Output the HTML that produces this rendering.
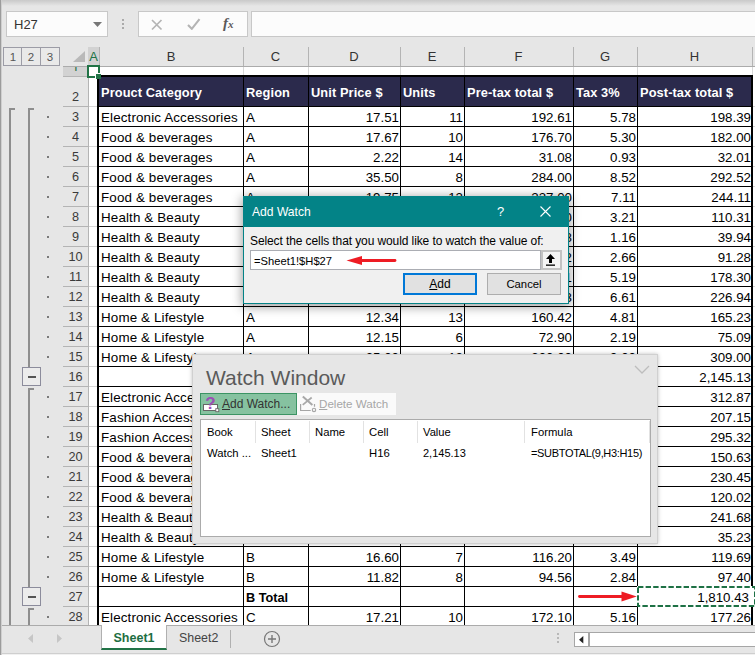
<!DOCTYPE html><html><head><meta charset="utf-8"><title>Add Watch</title><style>
*{box-sizing:border-box;margin:0;padding:0}
html,body{width:755px;height:655px;overflow:hidden}
body{position:relative;background:#e6e6e6;font-family:"Liberation Sans",sans-serif;font-size:13px;color:#000}
.abs,.abs *{position:absolute}
.abs u,.abs text{position:static}
#topgrad{left:0;top:0;width:755px;height:6px;background:linear-gradient(#c9c9c9,#e6e6e6)}
#leftedge{left:0;top:0;width:2px;height:655px;background:linear-gradient(90deg,#9c9c9c 0 1px,#cfcfcf 1px 2px)}
.box{background:#fcfcfc;border:1px solid #c8c8c8}
#namebox{left:6px;top:11px;width:102px;height:26px}
#namebox span{left:7px;top:6px;font-size:13px;color:#333;white-space:nowrap}
#fxbox{left:138px;top:11px;width:110px;height:26px}
#fbar{left:251px;top:11px;width:510px;height:26px}
.t{white-space:nowrap;line-height:1}
/* sheet */
#sheet{left:88px;top:67px;width:667px;height:559px;background:#fff}
.colh{top:47px;height:19px;text-align:center;font-size:13px;color:#333;line-height:19px}
.colsep{top:47px;width:1px;height:19px;background:#b4b4b4}
.rowh{left:63px;width:25px;text-align:center;font-size:12.7px;color:#3a3a3a;line-height:23px;height:20px}
.rowline{left:63px;width:25px;height:1px;background:#b4b4b4}
.cell{height:20px;line-height:24px;font-size:13.3px;white-space:nowrap;overflow:hidden}
.l{text-align:left;padding-left:1px;font-size:13.4px;letter-spacing:.13px}
.r{text-align:right;padding-right:1px}
.c2{padding-left:2px}
.hl{background:#000}
.dot{left:47px;width:2px;height:2px;background:#7a7a7a}
.br{background:#8e8e8e}
.minus{left:22px;width:19px;height:19px;border:1px solid #8c8c9c;background:#ececec}
.minus i{left:5px;top:8px;width:8px;height:2px;background:#555}
.dlg{font-size:12px;color:#000}
.ui{font-family:"Liberation Sans",sans-serif;font-size:12px;white-space:nowrap;line-height:1}
.lvl{top:47px;width:20px;height:19px;border:1px solid #9c9ca6;background:#e9e9e9;text-align:center;font-size:11.5px;line-height:18px;color:#555}
</style></head><body><div class="abs">
<div id="topgrad"></div>
<div id="namebox" class="box"><span class="t">H27</span><svg style="left:86px;top:10px" width="9" height="5"><path d="M0 0h9L4.5 5z" fill="#777"/></svg></div>
<svg style="left:122px;top:19px" width="3" height="11"><rect x="0" y="0" width="2" height="2" fill="#aaa"/><rect x="0" y="4" width="2" height="2" fill="#aaa"/><rect x="0" y="8" width="2" height="2" fill="#aaa"/></svg>
<div id="fxbox" class="box"><svg style="left:12px;top:7px" width="12" height="12"><path d="M1 1l9.5 9.5M10.5 1L1 10.5" stroke="#b4b4b4" stroke-width="1.7" fill="none"/></svg><svg style="left:48px;top:6px" width="14" height="12"><path d="M1 7l3.8 3.8L12.5 1.2" stroke="#b4b4b4" stroke-width="2.1" fill="none"/></svg><span class="t" style="left:84px;top:4px;font-family:'Liberation Serif',serif;font-style:italic;font-weight:bold;font-size:15px;color:#5a5a5a">f<span style="position:static;font-size:11px">x</span></span></div>
<div id="fbar" class="box"></div>
<div class="lvl" style="left:3px">1</div>
<div class="lvl" style="left:21px">2</div>
<div class="lvl" style="left:40px">3</div>
<svg style="left:73px;top:51px" width="13" height="12"><path d="M12 0v11H0z" fill="#b9b9b9"/></svg>
<div class="colh" style="left:88px;width:11px;background:#d2d2d2;color:#217346">A</div>
<div class="colh" style="left:99px;width:144px">B</div>
<div class="colh" style="left:243px;width:65px">C</div>
<div class="colh" style="left:308px;width:92px">D</div>
<div class="colh" style="left:400px;width:64px">E</div>
<div class="colh" style="left:464px;width:109px">F</div>
<div class="colh" style="left:573px;width:64px">G</div>
<div class="colh" style="left:637px;width:115px">H</div>
<div class="colsep" style="left:99px"></div>
<div class="colsep" style="left:243px"></div>
<div class="colsep" style="left:308px"></div>
<div class="colsep" style="left:400px"></div>
<div class="colsep" style="left:464px"></div>
<div class="colsep" style="left:573px"></div>
<div class="colsep" style="left:637px"></div>
<div class="colsep" style="left:752px"></div>
<div style="left:63px;top:66px;width:692px;height:1px;background:#ababab"></div>
<div id="sheet"></div>
<div style="left:88px;top:66px;width:1px;height:560px;background:#b4b4b4"></div>
<div style="left:63px;top:67px;width:25px;height:9px;background:#d2d2d2"><div style="left:0;top:0;width:25px;height:4px;overflow:hidden"><span class="t" style="left:9px;top:-5px;font-size:13px;color:#217346">1</span></div></div>
<div class="rowline" style="top:76px"></div>
<div style="left:243px;top:67px;width:1px;height:9px;background:#d8d8d8"></div>
<div style="left:308px;top:67px;width:1px;height:9px;background:#d8d8d8"></div>
<div style="left:400px;top:67px;width:1px;height:9px;background:#d8d8d8"></div>
<div style="left:464px;top:67px;width:1px;height:9px;background:#d8d8d8"></div>
<div style="left:573px;top:67px;width:1px;height:9px;background:#d8d8d8"></div>
<div style="left:637px;top:67px;width:1px;height:9px;background:#d8d8d8"></div>
<div style="left:752px;top:67px;width:1px;height:9px;background:#d8d8d8"></div>
<div class="rowh" style="top:86px">2</div><div class="rowline" style="top:106px"></div>
<div style="left:97px;top:75px;width:656px;height:32px;background:#000"></div>
<div style="left:99px;top:77px;width:144px;height:29px;background:#2b2a4c;color:#fff;font-weight:bold;font-size:12.8px;letter-spacing:.1px;line-height:1;white-space:nowrap;overflow:hidden"><span style="left:2px;top:10px">Prouct Category</span></div>
<div style="left:244px;top:77px;width:64px;height:29px;background:#2b2a4c;color:#fff;font-weight:bold;font-size:12.8px;letter-spacing:.1px;line-height:1;white-space:nowrap;overflow:hidden"><span style="left:2px;top:10px">Region</span></div>
<div style="left:309px;top:77px;width:91px;height:29px;background:#2b2a4c;color:#fff;font-weight:bold;font-size:12.8px;letter-spacing:.1px;line-height:1;white-space:nowrap;overflow:hidden"><span style="left:2px;top:10px">Unit Price $</span></div>
<div style="left:401px;top:77px;width:63px;height:29px;background:#2b2a4c;color:#fff;font-weight:bold;font-size:12.8px;letter-spacing:.1px;line-height:1;white-space:nowrap;overflow:hidden"><span style="left:2px;top:10px">Units</span></div>
<div style="left:465px;top:77px;width:108px;height:29px;background:#2b2a4c;color:#fff;font-weight:bold;font-size:12.8px;letter-spacing:.1px;line-height:1;white-space:nowrap;overflow:hidden"><span style="left:2px;top:10px">Pre-tax total $</span></div>
<div style="left:574px;top:77px;width:63px;height:29px;background:#2b2a4c;color:#fff;font-weight:bold;font-size:12.8px;letter-spacing:.1px;line-height:1;white-space:nowrap;overflow:hidden"><span style="left:2px;top:10px">Tax 3%</span></div>
<div style="left:638px;top:77px;width:113px;height:29px;background:#2b2a4c;color:#fff;font-weight:bold;font-size:12.8px;letter-spacing:.1px;line-height:1;white-space:nowrap;overflow:hidden"><span style="left:2px;top:10px">Post-tax total $</span></div>
<div class="rowh" style="top:106px">3</div><div class="rowline" style="top:126px"></div>
<div class="cell l" style="left:100px;top:106px;width:143px">Electronic Accessories</div>
<div class="cell l c2" style="left:244px;top:106px;width:64px">A</div>
<div class="cell r" style="left:309px;top:106px;width:91px">17.51</div>
<div class="cell r" style="left:401px;top:106px;width:63px">11</div>
<div class="cell r" style="left:465px;top:106px;width:108px">192.61</div>
<div class="cell r" style="left:574px;top:106px;width:63px">5.78</div>
<div class="cell r" style="left:638px;top:106px;width:114px">198.39</div>
<div class="rowh" style="top:126px">4</div><div class="rowline" style="top:146px"></div>
<div class="cell l" style="left:100px;top:126px;width:143px">Food & beverages</div>
<div class="cell l c2" style="left:244px;top:126px;width:64px">A</div>
<div class="cell r" style="left:309px;top:126px;width:91px">17.67</div>
<div class="cell r" style="left:401px;top:126px;width:63px">10</div>
<div class="cell r" style="left:465px;top:126px;width:108px">176.70</div>
<div class="cell r" style="left:574px;top:126px;width:63px">5.30</div>
<div class="cell r" style="left:638px;top:126px;width:114px">182.00</div>
<div class="rowh" style="top:146px">5</div><div class="rowline" style="top:166px"></div>
<div class="cell l" style="left:100px;top:146px;width:143px">Food & beverages</div>
<div class="cell l c2" style="left:244px;top:146px;width:64px">A</div>
<div class="cell r" style="left:309px;top:146px;width:91px">2.22</div>
<div class="cell r" style="left:401px;top:146px;width:63px">14</div>
<div class="cell r" style="left:465px;top:146px;width:108px">31.08</div>
<div class="cell r" style="left:574px;top:146px;width:63px">0.93</div>
<div class="cell r" style="left:638px;top:146px;width:114px">32.01</div>
<div class="rowh" style="top:166px">6</div><div class="rowline" style="top:186px"></div>
<div class="cell l" style="left:100px;top:166px;width:143px">Food & beverages</div>
<div class="cell l c2" style="left:244px;top:166px;width:64px">A</div>
<div class="cell r" style="left:309px;top:166px;width:91px">35.50</div>
<div class="cell r" style="left:401px;top:166px;width:63px">8</div>
<div class="cell r" style="left:465px;top:166px;width:108px">284.00</div>
<div class="cell r" style="left:574px;top:166px;width:63px">8.52</div>
<div class="cell r" style="left:638px;top:166px;width:114px">292.52</div>
<div class="rowh" style="top:186px">7</div><div class="rowline" style="top:206px"></div>
<div class="cell l" style="left:100px;top:186px;width:143px">Food & beverages</div>
<div class="cell l c2" style="left:244px;top:186px;width:64px">A</div>
<div class="cell r" style="left:309px;top:186px;width:91px">19.75</div>
<div class="cell r" style="left:401px;top:186px;width:63px">12</div>
<div class="cell r" style="left:465px;top:186px;width:108px">237.00</div>
<div class="cell r" style="left:574px;top:186px;width:63px">7.11</div>
<div class="cell r" style="left:638px;top:186px;width:114px">244.11</div>
<div class="rowh" style="top:206px">8</div><div class="rowline" style="top:226px"></div>
<div class="cell l" style="left:100px;top:206px;width:143px">Health & Beauty</div>
<div class="cell l c2" style="left:244px;top:206px;width:64px">A</div>
<div class="cell r" style="left:309px;top:206px;width:91px">10.71</div>
<div class="cell r" style="left:401px;top:206px;width:63px">10</div>
<div class="cell r" style="left:465px;top:206px;width:108px">107.10</div>
<div class="cell r" style="left:574px;top:206px;width:63px">3.21</div>
<div class="cell r" style="left:638px;top:206px;width:114px">110.31</div>
<div class="rowh" style="top:226px">9</div><div class="rowline" style="top:246px"></div>
<div class="cell l" style="left:100px;top:226px;width:143px">Health & Beauty</div>
<div class="cell l c2" style="left:244px;top:226px;width:64px">A</div>
<div class="cell r" style="left:309px;top:226px;width:91px">12.93</div>
<div class="cell r" style="left:401px;top:226px;width:63px">3</div>
<div class="cell r" style="left:465px;top:226px;width:108px">38.78</div>
<div class="cell r" style="left:574px;top:226px;width:63px">1.16</div>
<div class="cell r" style="left:638px;top:226px;width:114px">39.94</div>
<div class="rowh" style="top:246px">10</div><div class="rowline" style="top:266px"></div>
<div class="cell l" style="left:100px;top:246px;width:143px">Health & Beauty</div>
<div class="cell l c2" style="left:244px;top:246px;width:64px">A</div>
<div class="cell r" style="left:309px;top:246px;width:91px">11.08</div>
<div class="cell r" style="left:401px;top:246px;width:63px">8</div>
<div class="cell r" style="left:465px;top:246px;width:108px">88.62</div>
<div class="cell r" style="left:574px;top:246px;width:63px">2.66</div>
<div class="cell r" style="left:638px;top:246px;width:114px">91.28</div>
<div class="rowh" style="top:266px">11</div><div class="rowline" style="top:286px"></div>
<div class="cell l" style="left:100px;top:266px;width:143px">Health & Beauty</div>
<div class="cell l c2" style="left:244px;top:266px;width:64px">A</div>
<div class="cell r" style="left:309px;top:266px;width:91px">14.43</div>
<div class="cell r" style="left:401px;top:266px;width:63px">12</div>
<div class="cell r" style="left:465px;top:266px;width:108px">173.11</div>
<div class="cell r" style="left:574px;top:266px;width:63px">5.19</div>
<div class="cell r" style="left:638px;top:266px;width:114px">178.30</div>
<div class="rowh" style="top:286px">12</div><div class="rowline" style="top:306px"></div>
<div class="cell l" style="left:100px;top:286px;width:143px">Health & Beauty</div>
<div class="cell l c2" style="left:244px;top:286px;width:64px">A</div>
<div class="cell r" style="left:309px;top:286px;width:91px">16.95</div>
<div class="cell r" style="left:401px;top:286px;width:63px">13</div>
<div class="cell r" style="left:465px;top:286px;width:108px">220.33</div>
<div class="cell r" style="left:574px;top:286px;width:63px">6.61</div>
<div class="cell r" style="left:638px;top:286px;width:114px">226.94</div>
<div class="rowh" style="top:306px">13</div><div class="rowline" style="top:326px"></div>
<div class="cell l" style="left:100px;top:306px;width:143px">Home & Lifestyle</div>
<div class="cell l c2" style="left:244px;top:306px;width:64px">A</div>
<div class="cell r" style="left:309px;top:306px;width:91px">12.34</div>
<div class="cell r" style="left:401px;top:306px;width:63px">13</div>
<div class="cell r" style="left:465px;top:306px;width:108px">160.42</div>
<div class="cell r" style="left:574px;top:306px;width:63px">4.81</div>
<div class="cell r" style="left:638px;top:306px;width:114px">165.23</div>
<div class="rowh" style="top:326px">14</div><div class="rowline" style="top:346px"></div>
<div class="cell l" style="left:100px;top:326px;width:143px">Home & Lifestyle</div>
<div class="cell l c2" style="left:244px;top:326px;width:64px">A</div>
<div class="cell r" style="left:309px;top:326px;width:91px">12.15</div>
<div class="cell r" style="left:401px;top:326px;width:63px">6</div>
<div class="cell r" style="left:465px;top:326px;width:108px">72.90</div>
<div class="cell r" style="left:574px;top:326px;width:63px">2.19</div>
<div class="cell r" style="left:638px;top:326px;width:114px">75.09</div>
<div class="rowh" style="top:346px">15</div><div class="rowline" style="top:366px"></div>
<div class="cell l" style="left:100px;top:346px;width:143px">Home & Lifestyle</div>
<div class="cell l c2" style="left:244px;top:346px;width:64px">A</div>
<div class="cell r" style="left:309px;top:346px;width:91px">25.00</div>
<div class="cell r" style="left:401px;top:346px;width:63px">12</div>
<div class="cell r" style="left:465px;top:346px;width:108px">300.00</div>
<div class="cell r" style="left:574px;top:346px;width:63px">9.00</div>
<div class="cell r" style="left:638px;top:346px;width:114px">309.00</div>
<div class="rowh" style="top:366px">16</div><div class="rowline" style="top:386px"></div>
<div class="cell l" style="left:244px;top:366px;width:64px;font-weight:bold;font-size:12.7px;letter-spacing:0;padding-left:2px">A Total</div>
<div class="cell r" style="left:638px;top:366px;width:114px">2,145.13</div>
<div class="rowh" style="top:386px">17</div><div class="rowline" style="top:406px"></div>
<div class="cell l" style="left:100px;top:386px;width:143px">Electronic Accessories</div>
<div class="cell l c2" style="left:244px;top:386px;width:64px">B</div>
<div class="cell r" style="left:309px;top:386px;width:91px">20.25</div>
<div class="cell r" style="left:401px;top:386px;width:63px">15</div>
<div class="cell r" style="left:465px;top:386px;width:108px">303.76</div>
<div class="cell r" style="left:574px;top:386px;width:63px">9.11</div>
<div class="cell r" style="left:638px;top:386px;width:114px">312.87</div>
<div class="rowh" style="top:406px">18</div><div class="rowline" style="top:426px"></div>
<div class="cell l" style="left:100px;top:406px;width:143px">Fashion Accessories</div>
<div class="cell l c2" style="left:244px;top:406px;width:64px">B</div>
<div class="cell r" style="left:309px;top:406px;width:91px">18.28</div>
<div class="cell r" style="left:401px;top:406px;width:63px">11</div>
<div class="cell r" style="left:465px;top:406px;width:108px">201.12</div>
<div class="cell r" style="left:574px;top:406px;width:63px">6.03</div>
<div class="cell r" style="left:638px;top:406px;width:114px">207.15</div>
<div class="rowh" style="top:426px">19</div><div class="rowline" style="top:446px"></div>
<div class="cell l" style="left:100px;top:426px;width:143px">Fashion Accessories</div>
<div class="cell l c2" style="left:244px;top:426px;width:64px">B</div>
<div class="cell r" style="left:309px;top:426px;width:91px">20.48</div>
<div class="cell r" style="left:401px;top:426px;width:63px">14</div>
<div class="cell r" style="left:465px;top:426px;width:108px">286.72</div>
<div class="cell r" style="left:574px;top:426px;width:63px">8.60</div>
<div class="cell r" style="left:638px;top:426px;width:114px">295.32</div>
<div class="rowh" style="top:446px">20</div><div class="rowline" style="top:466px"></div>
<div class="cell l" style="left:100px;top:446px;width:143px">Food & beverages</div>
<div class="cell l c2" style="left:244px;top:446px;width:64px">B</div>
<div class="cell r" style="left:309px;top:446px;width:91px">14.62</div>
<div class="cell r" style="left:401px;top:446px;width:63px">10</div>
<div class="cell r" style="left:465px;top:446px;width:108px">146.24</div>
<div class="cell r" style="left:574px;top:446px;width:63px">4.39</div>
<div class="cell r" style="left:638px;top:446px;width:114px">150.63</div>
<div class="rowh" style="top:466px">21</div><div class="rowline" style="top:486px"></div>
<div class="cell l" style="left:100px;top:466px;width:143px">Food & beverages</div>
<div class="cell l c2" style="left:244px;top:466px;width:64px">B</div>
<div class="cell r" style="left:309px;top:466px;width:91px">18.65</div>
<div class="cell r" style="left:401px;top:466px;width:63px">12</div>
<div class="cell r" style="left:465px;top:466px;width:108px">223.74</div>
<div class="cell r" style="left:574px;top:466px;width:63px">6.71</div>
<div class="cell r" style="left:638px;top:466px;width:114px">230.45</div>
<div class="rowh" style="top:486px">22</div><div class="rowline" style="top:506px"></div>
<div class="cell l" style="left:100px;top:486px;width:143px">Food & beverages</div>
<div class="cell l c2" style="left:244px;top:486px;width:64px">B</div>
<div class="cell r" style="left:309px;top:486px;width:91px">12.95</div>
<div class="cell r" style="left:401px;top:486px;width:63px">9</div>
<div class="cell r" style="left:465px;top:486px;width:108px">116.52</div>
<div class="cell r" style="left:574px;top:486px;width:63px">3.50</div>
<div class="cell r" style="left:638px;top:486px;width:114px">120.02</div>
<div class="rowh" style="top:506px">23</div><div class="rowline" style="top:526px"></div>
<div class="cell l" style="left:100px;top:506px;width:143px">Health & Beauty</div>
<div class="cell l c2" style="left:244px;top:506px;width:64px">B</div>
<div class="cell r" style="left:309px;top:506px;width:91px">19.55</div>
<div class="cell r" style="left:401px;top:506px;width:63px">12</div>
<div class="cell r" style="left:465px;top:506px;width:108px">234.64</div>
<div class="cell r" style="left:574px;top:506px;width:63px">7.04</div>
<div class="cell r" style="left:638px;top:506px;width:114px">241.68</div>
<div class="rowh" style="top:526px">24</div><div class="rowline" style="top:546px"></div>
<div class="cell l" style="left:100px;top:526px;width:143px">Health & Beauty</div>
<div class="cell l c2" style="left:244px;top:526px;width:64px">B</div>
<div class="cell r" style="left:309px;top:526px;width:91px">11.40</div>
<div class="cell r" style="left:401px;top:526px;width:63px">3</div>
<div class="cell r" style="left:465px;top:526px;width:108px">34.20</div>
<div class="cell r" style="left:574px;top:526px;width:63px">1.03</div>
<div class="cell r" style="left:638px;top:526px;width:114px">35.23</div>
<div class="rowh" style="top:546px">25</div><div class="rowline" style="top:566px"></div>
<div class="cell l" style="left:100px;top:546px;width:143px">Home & Lifestyle</div>
<div class="cell l c2" style="left:244px;top:546px;width:64px">B</div>
<div class="cell r" style="left:309px;top:546px;width:91px">16.60</div>
<div class="cell r" style="left:401px;top:546px;width:63px">7</div>
<div class="cell r" style="left:465px;top:546px;width:108px">116.20</div>
<div class="cell r" style="left:574px;top:546px;width:63px">3.49</div>
<div class="cell r" style="left:638px;top:546px;width:114px">119.69</div>
<div class="rowh" style="top:566px">26</div><div class="rowline" style="top:586px"></div>
<div class="cell l" style="left:100px;top:566px;width:143px">Home & Lifestyle</div>
<div class="cell l c2" style="left:244px;top:566px;width:64px">B</div>
<div class="cell r" style="left:309px;top:566px;width:91px">11.82</div>
<div class="cell r" style="left:401px;top:566px;width:63px">8</div>
<div class="cell r" style="left:465px;top:566px;width:108px">94.56</div>
<div class="cell r" style="left:574px;top:566px;width:63px">2.84</div>
<div class="cell r" style="left:638px;top:566px;width:114px">97.40</div>
<div class="rowh" style="top:586px">27</div><div class="rowline" style="top:606px"></div>
<div class="cell l" style="left:244px;top:586px;width:64px;font-weight:bold;font-size:12.7px;letter-spacing:0;padding-left:2px">B Total</div>
<div class="rowh" style="top:606px">28</div><div class="rowline" style="top:626px"></div>
<div class="cell l" style="left:100px;top:606px;width:143px">Electronic Accessories</div>
<div class="cell l c2" style="left:244px;top:606px;width:64px">C</div>
<div class="cell r" style="left:309px;top:606px;width:91px">17.21</div>
<div class="cell r" style="left:401px;top:606px;width:63px">10</div>
<div class="cell r" style="left:465px;top:606px;width:108px">172.10</div>
<div class="cell r" style="left:574px;top:606px;width:63px">5.16</div>
<div class="cell r" style="left:638px;top:606px;width:114px">177.26</div>
<div class="hl" style="left:99px;top:126px;width:653px;height:1px"></div>
<div class="hl" style="left:99px;top:146px;width:653px;height:1px"></div>
<div class="hl" style="left:99px;top:166px;width:653px;height:1px"></div>
<div class="hl" style="left:99px;top:186px;width:653px;height:1px"></div>
<div class="hl" style="left:99px;top:206px;width:653px;height:1px"></div>
<div class="hl" style="left:99px;top:226px;width:653px;height:1px"></div>
<div class="hl" style="left:99px;top:246px;width:653px;height:1px"></div>
<div class="hl" style="left:99px;top:266px;width:653px;height:1px"></div>
<div class="hl" style="left:99px;top:286px;width:653px;height:1px"></div>
<div class="hl" style="left:99px;top:306px;width:653px;height:1px"></div>
<div class="hl" style="left:99px;top:326px;width:653px;height:1px"></div>
<div class="hl" style="left:99px;top:346px;width:653px;height:1px"></div>
<div class="hl" style="left:99px;top:366px;width:653px;height:1px"></div>
<div class="hl" style="left:99px;top:386px;width:653px;height:1px"></div>
<div class="hl" style="left:99px;top:406px;width:653px;height:1px"></div>
<div class="hl" style="left:99px;top:426px;width:653px;height:1px"></div>
<div class="hl" style="left:99px;top:446px;width:653px;height:1px"></div>
<div class="hl" style="left:99px;top:466px;width:653px;height:1px"></div>
<div class="hl" style="left:99px;top:486px;width:653px;height:1px"></div>
<div class="hl" style="left:99px;top:506px;width:653px;height:1px"></div>
<div class="hl" style="left:99px;top:526px;width:653px;height:1px"></div>
<div class="hl" style="left:99px;top:546px;width:653px;height:1px"></div>
<div class="hl" style="left:99px;top:566px;width:653px;height:1px"></div>
<div class="hl" style="left:99px;top:586px;width:653px;height:1px"></div>
<div class="hl" style="left:99px;top:606px;width:653px;height:1px"></div>
<div class="hl" style="left:243px;top:107px;width:1px;height:519px"></div>
<div class="hl" style="left:308px;top:107px;width:1px;height:519px"></div>
<div class="hl" style="left:400px;top:107px;width:1px;height:519px"></div>
<div class="hl" style="left:464px;top:107px;width:1px;height:519px"></div>
<div class="hl" style="left:573px;top:107px;width:1px;height:519px"></div>
<div class="hl" style="left:637px;top:107px;width:1px;height:519px"></div>
<div class="hl" style="left:97px;top:107px;width:2px;height:519px"></div>
<div class="hl" style="left:751px;top:107px;width:2px;height:519px"></div>
<div style="left:89px;top:106px;width:8px;height:1px;background:#d6d6d6"></div><div style="left:753px;top:106px;width:2px;height:1px;background:#d6d6d6"></div>
<div style="left:89px;top:126px;width:8px;height:1px;background:#d6d6d6"></div><div style="left:753px;top:126px;width:2px;height:1px;background:#d6d6d6"></div>
<div style="left:89px;top:146px;width:8px;height:1px;background:#d6d6d6"></div><div style="left:753px;top:146px;width:2px;height:1px;background:#d6d6d6"></div>
<div style="left:89px;top:166px;width:8px;height:1px;background:#d6d6d6"></div><div style="left:753px;top:166px;width:2px;height:1px;background:#d6d6d6"></div>
<div style="left:89px;top:186px;width:8px;height:1px;background:#d6d6d6"></div><div style="left:753px;top:186px;width:2px;height:1px;background:#d6d6d6"></div>
<div style="left:89px;top:206px;width:8px;height:1px;background:#d6d6d6"></div><div style="left:753px;top:206px;width:2px;height:1px;background:#d6d6d6"></div>
<div style="left:89px;top:226px;width:8px;height:1px;background:#d6d6d6"></div><div style="left:753px;top:226px;width:2px;height:1px;background:#d6d6d6"></div>
<div style="left:89px;top:246px;width:8px;height:1px;background:#d6d6d6"></div><div style="left:753px;top:246px;width:2px;height:1px;background:#d6d6d6"></div>
<div style="left:89px;top:266px;width:8px;height:1px;background:#d6d6d6"></div><div style="left:753px;top:266px;width:2px;height:1px;background:#d6d6d6"></div>
<div style="left:89px;top:286px;width:8px;height:1px;background:#d6d6d6"></div><div style="left:753px;top:286px;width:2px;height:1px;background:#d6d6d6"></div>
<div style="left:89px;top:306px;width:8px;height:1px;background:#d6d6d6"></div><div style="left:753px;top:306px;width:2px;height:1px;background:#d6d6d6"></div>
<div style="left:89px;top:326px;width:8px;height:1px;background:#d6d6d6"></div><div style="left:753px;top:326px;width:2px;height:1px;background:#d6d6d6"></div>
<div style="left:89px;top:346px;width:8px;height:1px;background:#d6d6d6"></div><div style="left:753px;top:346px;width:2px;height:1px;background:#d6d6d6"></div>
<div style="left:89px;top:366px;width:8px;height:1px;background:#d6d6d6"></div><div style="left:753px;top:366px;width:2px;height:1px;background:#d6d6d6"></div>
<div style="left:89px;top:386px;width:8px;height:1px;background:#d6d6d6"></div><div style="left:753px;top:386px;width:2px;height:1px;background:#d6d6d6"></div>
<div style="left:89px;top:406px;width:8px;height:1px;background:#d6d6d6"></div><div style="left:753px;top:406px;width:2px;height:1px;background:#d6d6d6"></div>
<div style="left:89px;top:426px;width:8px;height:1px;background:#d6d6d6"></div><div style="left:753px;top:426px;width:2px;height:1px;background:#d6d6d6"></div>
<div style="left:89px;top:446px;width:8px;height:1px;background:#d6d6d6"></div><div style="left:753px;top:446px;width:2px;height:1px;background:#d6d6d6"></div>
<div style="left:89px;top:466px;width:8px;height:1px;background:#d6d6d6"></div><div style="left:753px;top:466px;width:2px;height:1px;background:#d6d6d6"></div>
<div style="left:89px;top:486px;width:8px;height:1px;background:#d6d6d6"></div><div style="left:753px;top:486px;width:2px;height:1px;background:#d6d6d6"></div>
<div style="left:89px;top:506px;width:8px;height:1px;background:#d6d6d6"></div><div style="left:753px;top:506px;width:2px;height:1px;background:#d6d6d6"></div>
<div style="left:89px;top:526px;width:8px;height:1px;background:#d6d6d6"></div><div style="left:753px;top:526px;width:2px;height:1px;background:#d6d6d6"></div>
<div style="left:89px;top:546px;width:8px;height:1px;background:#d6d6d6"></div><div style="left:753px;top:546px;width:2px;height:1px;background:#d6d6d6"></div>
<div style="left:89px;top:566px;width:8px;height:1px;background:#d6d6d6"></div><div style="left:753px;top:566px;width:2px;height:1px;background:#d6d6d6"></div>
<div style="left:89px;top:586px;width:8px;height:1px;background:#d6d6d6"></div><div style="left:753px;top:586px;width:2px;height:1px;background:#d6d6d6"></div>
<div style="left:89px;top:606px;width:8px;height:1px;background:#d6d6d6"></div><div style="left:753px;top:606px;width:2px;height:1px;background:#d6d6d6"></div>
<div style="left:87px;top:65px;width:13px;height:13px;border:2px solid #217346;background:#fff"></div>
<div style="left:95px;top:73px;width:6px;height:6px;background:#217346;border:1px solid #fff;border-right:0;border-bottom:0"></div>
<div class="dot" style="top:116px"></div>
<div class="dot" style="top:136px"></div>
<div class="dot" style="top:156px"></div>
<div class="dot" style="top:176px"></div>
<div class="dot" style="top:196px"></div>
<div class="dot" style="top:216px"></div>
<div class="dot" style="top:236px"></div>
<div class="dot" style="top:256px"></div>
<div class="dot" style="top:276px"></div>
<div class="dot" style="top:296px"></div>
<div class="dot" style="top:316px"></div>
<div class="dot" style="top:336px"></div>
<div class="dot" style="top:356px"></div>
<div class="dot" style="top:396px"></div>
<div class="dot" style="top:416px"></div>
<div class="dot" style="top:436px"></div>
<div class="dot" style="top:456px"></div>
<div class="dot" style="top:476px"></div>
<div class="dot" style="top:496px"></div>
<div class="dot" style="top:516px"></div>
<div class="dot" style="top:536px"></div>
<div class="dot" style="top:556px"></div>
<div class="dot" style="top:576px"></div>
<div class="dot" style="top:616px"></div>
<div class="br" style="left:9px;top:108px;width:2px;height:518px"></div><div class="br" style="left:9px;top:108px;width:6px;height:2px"></div>
<div class="br" style="left:28px;top:108px;width:2px;height:259px"></div><div class="br" style="left:28px;top:108px;width:6px;height:2px"></div>
<div class="minus" style="top:367px"><i></i></div>
<div class="br" style="left:28px;top:388px;width:2px;height:199px"></div><div class="br" style="left:28px;top:388px;width:6px;height:2px"></div>
<div class="minus" style="top:587px"><i></i></div>
<div class="br" style="left:28px;top:608px;width:2px;height:18px"></div><div class="br" style="left:28px;top:608px;width:6px;height:2px"></div>
<svg style="left:636px;top:585px" width="119" height="23"><rect x="2" y="2" width="117" height="19" fill="#fff" stroke="#fff" stroke-width="2"/><rect x="2" y="2" width="117" height="19" fill="none" stroke="#1e7145" stroke-width="2" stroke-dasharray="5.4 2.2"/></svg>
<div class="cell r" style="left:638px;top:586px;width:112px">1,810.43</div>
<svg style="left:576px;top:588px" width="62" height="17"><path d="M3.5 8.5H48" stroke="#ee1c24" stroke-width="2.8" stroke-linecap="round"/><path d="M45.5 3.5L60.8 8.5L45.5 13.5z" fill="#ee1c24"/></svg>
<div style="left:0;top:625px;width:755px;height:30px;background:#e6e6e6"></div>
<div style="left:0;top:625px;width:755px;height:1px;background:#ababab"></div>
<div style="left:101px;top:625px;width:66px;height:25px;background:#fff;border-left:1px solid #b0b0b0;border-right:1px solid #b0b0b0;border-bottom:2px solid #217346;text-align:center;font-weight:bold;font-size:12.5px;color:#1e6e42;line-height:26px">Sheet1</div>
<div class="t" style="left:179px;top:632px;font-size:12.4px;color:#444">Sheet2</div>
<div style="left:230px;top:630px;width:1px;height:18px;background:#b0b0b0"></div>
<svg style="left:263px;top:630px" width="18" height="18"><circle cx="9" cy="9" r="7.5" fill="none" stroke="#777" stroke-width="1.2"/><path d="M9 5v8M5 9h8" stroke="#777" stroke-width="1.4"/></svg>
<svg style="left:28px;top:634px" width="6" height="9"><path d="M5 0v9L0 4.5z" fill="#c6c6c6"/></svg>
<svg style="left:57px;top:634px" width="6" height="9"><path d="M0 0v9L5 4.5z" fill="#c6c6c6"/></svg>
<svg style="left:557px;top:633px" width="3" height="12"><rect y="0" width="2" height="2" fill="#b8b8b8"/><rect y="4" width="2" height="2" fill="#b8b8b8"/><rect y="8" width="2" height="2" fill="#b8b8b8"/></svg>
<div style="left:589px;top:632px;width:175px;height:15px;background:#fff;border:1px solid #a6a6a6"></div>
<div style="left:574px;top:632px;width:15px;height:15px;background:#fff;border:1px solid #a6a6a6"><svg style="left:4px;top:3px" width="5" height="8"><path d="M4.3 0v7.4L0 3.7z" fill="#222"/></svg></div>
<div style="left:0;top:653px;width:755px;height:1px;background:#cfcfcf"></div><div style="left:0;top:654px;width:755px;height:1px;background:#f1f1f1"></div>
<div id="leftedge"></div>
<!-- Add Watch dialog -->
<div class="dlg" style="left:243px;top:196px;width:326px;height:108px;background:#f0f0f0;border:1px solid #038387;box-shadow:0 2px 10px 1px rgba(0,0,0,.38)">
  <div style="left:0;top:0;width:324px;height:30px;background:#038387"></div>
  <span class="ui" style="left:8px;top:9px;color:#fff;font-size:12.1px">Add Watch</span>
  <span class="ui" style="left:253px;top:8px;color:#fff;font-size:13px">?</span>
  <svg style="left:296px;top:9px" width="11" height="11"><path d="M0.5 0.5l10 10M10.5 0.5l-10 10" stroke="#fff" stroke-width="1.1" fill="none"/></svg>
  <span class="ui" style="left:6px;top:38px;letter-spacing:-.1px">Select the cells that you would like to watch the value of:</span>
  <div style="left:6px;top:53px;width:291px;height:20px;background:#fff;border:1px solid #abadb3"></div>
  <span class="ui" style="left:10px;top:59px;font-size:11.2px">=Sheet1!$H$27</span>
  <svg style="left:100px;top:55px" width="56" height="17"><path d="M16 8.5H51" stroke="#ee1c24" stroke-width="2.8" stroke-linecap="round"/><path d="M18 4L2.5 8.5L18 13z" fill="#ee1c24"/></svg>
  <div style="left:297px;top:53px;width:21px;height:20px;background:#f4f4f4;border:2px solid #c2c2c2"><svg style="left:2px;top:2px" width="11" height="12"><path d="M5.5 0L10 5H7v4H4V5H1z" fill="#000"/><rect x="1" y="10.5" width="9" height="1.3" fill="#000"/></svg></div>
  <div style="left:159px;top:76px;width:74px;height:22px;background:#e1e1e1;border:2px solid #0078d7;text-align:center"><span class="ui" style="position:static;line-height:18px"><u>A</u>dd</span></div>
  <div style="left:243px;top:76px;width:74px;height:22px;background:#e1e1e1;border:1px solid #adadad;text-align:center"><span class="ui" style="position:static;line-height:20px;font-size:11.3px">Cancel</span></div>
</div>
<!-- Watch Window -->
<div class="dlg" style="left:192px;top:354px;width:466px;height:190px;background:#e6e6e6;border:1px solid #d0d0d0;box-shadow:0 0 4px rgba(0,0,0,.25)">
  <span class="ui" style="left:13px;top:12px;font-size:21px;color:#5a5a5a">Watch Window</span>
  <svg style="left:441px;top:10px" width="16" height="9"><path d="M1 1l7 7l7-7" stroke="#bdbdbd" stroke-width="1.3" fill="none"/></svg>
  <div style="left:7px;top:38px;width:97px;height:22px;background:#86c2a0;border:1px solid #3c9464"></div>
  <svg style="left:9px;top:40px" width="20" height="19"><rect x="1.5" y="9.5" width="14" height="6" fill="#fff" stroke="#666"/><text x="3.2" y="13.8" font-family="Liberation Sans,sans-serif" font-weight="bold" font-size="17" fill="#9b4fb5">?</text><rect x="13.8" y="13.7" width="3" height="3" fill="#fff" stroke="#666" stroke-width=".9"/></svg>
  <span class="ui" style="left:29px;top:43px;color:#333"><u>A</u>dd Watch...</span>
  <div style="left:104px;top:38px;width:99px;height:22px;background:#fafafa"></div>
  <svg style="left:107px;top:40px" width="20" height="19"><path d="M2.8 1.6L12.4 10" stroke="#a8a8a8" stroke-width="2" /><path d="M11.7 2.5L2.7 9.8" stroke="#a8a8a8" stroke-width="1.7"/><path d="M0.6 9.1V15.5H10.7M14.5 9.1V11.7" stroke="#a6a6a6" stroke-width="1.2" fill="none"/><circle cx="14" cy="14.9" r="1.7" fill="#f6f6f6" stroke="#a6a6a6" stroke-width="1.1"/></svg>
  <span class="ui" style="left:126px;top:43px;color:#a6a6a6;font-size:11.6px"><u>D</u>elete Watch</span>
  <div style="left:7px;top:64px;width:451px;height:118px;background:#fff;border:1px solid #ababab"></div>
  <div style="left:62px;top:66px;width:1px;height:22px;background:#e2e2e2"></div>
  <div style="left:116px;top:66px;width:1px;height:22px;background:#e2e2e2"></div>
  <div style="left:170px;top:66px;width:1px;height:22px;background:#e2e2e2"></div>
  <div style="left:224px;top:66px;width:1px;height:22px;background:#e2e2e2"></div>
  <div style="left:331px;top:66px;width:1px;height:22px;background:#e2e2e2"></div>
  <div style="left:456px;top:66px;width:1px;height:22px;background:#e2e2e2"></div>
  <span class="ui" style="left:14px;top:72px;font-size:11.3px">Book</span>
  <span class="ui" style="left:68px;top:72px;font-size:11.3px">Sheet</span>
  <span class="ui" style="left:122px;top:72px;font-size:11.3px">Name</span>
  <span class="ui" style="left:176px;top:72px;font-size:11.3px">Cell</span>
  <span class="ui" style="left:230px;top:72px;font-size:11.2px">Value</span>
  <span class="ui" style="left:338px;top:72px;font-size:11.3px">Formula</span>
  <span class="ui" style="left:14px;top:93px;font-size:11.3px">Watch ...</span>
  <span class="ui" style="left:68px;top:93px;font-size:11.3px">Sheet1</span>
  <span class="ui" style="left:176px;top:93px;font-size:11.3px">H16</span>
  <span class="ui" style="left:230px;top:93px;font-size:11px">2,145.13</span>
  <span class="ui" style="left:338px;top:93px;font-size:11px;letter-spacing:-.33px">=SUBTOTAL(9,H3:H15)</span>
</div>

</div></body></html>
